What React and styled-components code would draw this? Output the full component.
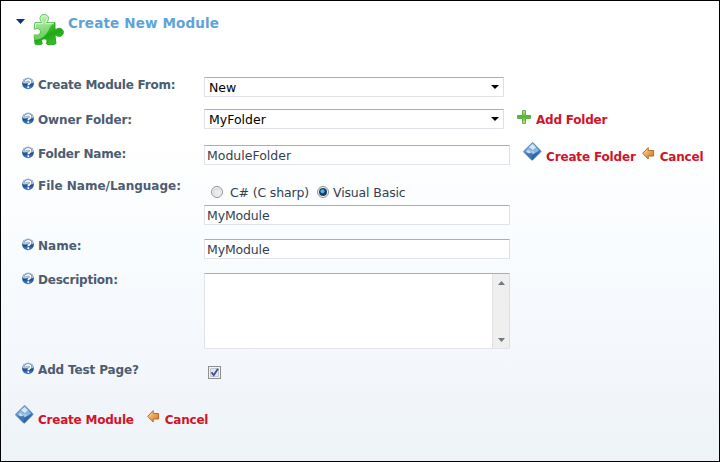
import React from "react";
import styled, { createGlobalStyle } from "styled-components";

const GlobalStyle = createGlobalStyle`
  body { margin: 0; }
  * { box-sizing: border-box; }
`;

const Panel = styled.main`
  width: 720px;
  height: 462px;
  border: 1px solid #000;
  padding: 0 0 0 14px;
  overflow: hidden;
  font-family: "DejaVu Sans", sans-serif;
  font-size: 12px;
  color: #333f50;
  background: linear-gradient(#fff 0, #fff 130px, #f9fcfe 250px, #f3f6fb 375px, #edf3f6 460px);
  svg { display: block; flex: none; }
`;

const Header = styled.header`
  display: flex;
  align-items: flex-start;
  height: 76px;
`;

const Toggle = styled.span`
  width: 9px;
  margin: 18px 8px 0 1px;
`;

const HeaderIcon = styled.span`
  margin: 13px 4px 0 0;
`;

const Title = styled.h1`
  margin: 13px 0 0 0;
  font-size: 13.5px;
  line-height: 18px;
  font-weight: bold;
  letter-spacing: 0.15px;
  white-space: nowrap;
  color: #5ea3d8;
`;

const Row = styled.div`
  display: grid;
  grid-template-columns: 189px 306px 1fr;
  align-items: start;
  height: ${(p) => p.$h}px;
`;

const Label = styled.label`
  display: flex;
  align-items: flex-start;
  gap: 4px;
  padding-left: 7px;
  margin-top: ${(p) => p.$top || 0}px;
  font-weight: bold;
  line-height: 16px;
  letter-spacing: ${(p) => p.$track || 0}px;
  white-space: nowrap;
  color: #4d5c70;
`;

const Field = styled.div`
  display: flex;
  align-items: center;
  width: ${(p) => p.$w || 306}px;
  height: 20px;
  padding: 0 2px 0 ${(p) => p.$pad || 2}px;
  border: 1px solid #e2e3ea;
  border-top-color: #abadb3;
  border-right-color: #dbdfe6;
  border-radius: 1px;
  background: #fff;
  color: ${(p) => p.$color || "#333f50"};
  font-size: 12.5px;
  letter-spacing: ${(p) => p.$track || 0}px;
  white-space: nowrap;
`;

const Arrow = styled.span`
  margin: 0 2px 0 auto;
`;

const Stack = styled.div`
  padding-top: 7px;
`;

const Radios = styled.div`
  display: flex;
  align-items: center;
  height: 16px;
  padding-left: 7px;
  margin-bottom: 5px;
  font-size: 12.5px;
  white-space: nowrap;
`;

const RadioText = styled.span`
  margin: 0 8px 0 ${(p) => p.$gap}px;
  letter-spacing: -0.15px;
`;

const TextArea = styled.div`
  display: flex;
  justify-content: flex-end;
  width: 306px;
  height: 76px;
  border: 1px solid #e2e3ea;
  border-top-color: #abadb3;
  border-right-color: #dbdfe6;
  border-radius: 1px;
  background: #fff;
`;

const ScrollBar = styled.div`
  display: flex;
  flex-direction: column;
  justify-content: space-between;
  align-items: center;
  width: 17px;
  padding: 7px 0 6px;
  border-left: 1px solid #e4e4e4;
  background: #efefef;
`;

const CheckBox = styled.span`
  display: block;
  width: 13px;
  height: 13px;
  margin: 5px 0 0 4px;
  border: 1px solid #8e8f8f;
  background: #f4f4f4;
`;

const Links = styled.div`
  display: flex;
  align-items: flex-start;
  padding-left: ${(p) => p.$left || 0}px;
`;

const Link = styled.a`
  margin-top: ${(p) => p.$top || 0}px;
  margin-left: ${(p) => p.$gap || 4}px;
  font-weight: bold;
  line-height: 16px;
  letter-spacing: ${(p) => p.$track ?? -0.22}px;
  white-space: nowrap;
  color: #cf142b;
`;

const IconBox = styled.span`
  margin-top: ${(p) => p.$top || 0}px;
  margin-left: ${(p) => p.$left || 0}px;
`;

function HelpIcon() {
  return (
    <svg width="12" height="13" viewBox="0 0 12 13">
      <defs>
        <linearGradient id="help" x1="0" y1="0" x2="0" y2="1">
          <stop offset="0" stopColor="#9db2ca" />
          <stop offset=".45" stopColor="#4d79ab" />
          <stop offset=".6" stopColor="#1e508e" />
          <stop offset="1" stopColor="#4a8ccb" />
        </linearGradient>
      </defs>
      <circle cx="6" cy="6.300" r="5.900" fill="url(#help)" />
      <path d="M.9 6C1.100 2.700 3.200 1.100 6 1.100S10.800 2.900 11.100 5.500C9.500 6.500 8.500 6.300 6 6.300S2.500 6.800.9 6Z" fill="#edf2f8" opacity=".65" />
      <path d="M3.500 4.700C3.800 2.200 8.600 2.100 8.600 4.900 8.600 6.600 6.300 6.500 6.300 8.300" fill="none" stroke="#3d6a9c" strokeWidth="2.500" />
      <path d="M3.500 4.700C3.800 2.200 8.600 2.100 8.600 4.900 8.600 6.600 6.300 6.500 6.300 8.200M6.300 9.200v1.900" fill="none" stroke="#fff" strokeWidth="1.700" />
    </svg>
  );
}

function PuzzleIcon() {
  const body =
    "M2 9H8.500C9.300 8 7.100 7.300 7.100 4.800A4.100 4.100 0 0 1 15.300 4.800C15.300 7.300 13 8 13.800 9H22V15.500C22.800 16.700 24 14.700 26.200 14.700A4.200 4.200 0 0 1 26.200 23.100C24 23.100 22.800 21.200 22 22.300L23 30.500C21 32 17 32 14 31.200 12.500 30 14.200 29.600 14 27.700 13.800 25.100 8.800 25.100 8.600 27.700 8.500 29.600 10 30 8.700 31.200 6.700 32 4 32 2 31L1.200 22C2 20.900 2.600 22 4.300 21.800 8.700 21.300 8.700 15.300 4.300 15 2.600 14.900 2 16.200 1.200 15.400Z";
  return (
    <svg width="31" height="32" viewBox="0 0 31 33" preserveAspectRatio="none">
      <defs>
        <linearGradient id="puzzle" x1="0" y1="0" x2=".4" y2="1">
          <stop offset="0" stopColor="#a8e698" />
          <stop offset=".45" stopColor="#4cc73f" />
          <stop offset=".75" stopColor="#1fa916" />
          <stop offset="1" stopColor="#35ba28" />
        </linearGradient>
        <linearGradient id="shine" x1="0" y1="0" x2="0" y2="1">
          <stop offset="0" stopColor="#e8fbdf" stopOpacity=".6" />
          <stop offset="1" stopColor="#8be37a" stopOpacity=".65" />
        </linearGradient>
        <clipPath id="puzzleClip"><path d={body} /></clipPath>
      </defs>
      <path d={body} fill="url(#puzzle)" stroke="#1fa31d" strokeWidth=".9" />
      <path d="M0 0h21v9C15 12 17 22 6 26L0 27Z" fill="url(#shine)" clipPath="url(#puzzleClip)" />
      <path d="M2.500 14V10h7.300C10.400 7.900 8.200 7.200 8.200 4.800 8.200 .8 14.200 .8 14.200 4.800 14.200 7.200 12 7.900 12.600 10H20.800" fill="none" stroke="#e2fad8" strokeWidth=".9" />
    </svg>
  );
}

function SaveIcon() {
  return (
    <svg width="19" height="19" viewBox="0 0 19 19">
      <defs>
        <linearGradient id="save" x1="0" y1="0" x2=".3" y2="1">
          <stop offset="0" stopColor="#8bb8e4" />
          <stop offset=".5" stopColor="#6796ca" />
          <stop offset="1" stopColor="#1b589f" />
        </linearGradient>
      </defs>
      <path d="M8.900.900q.8-.6 1.500.1l7.400 7.700q.5.700-.1 1.300L9.800 17.800q-.7.700-1.400 0L.8 10.200q-.5-.7.100-1.300Z" fill="url(#save)" stroke="#4f83b9" strokeWidth=".8" />
      <path d="M9.600 2l3.500 3.600-3.200 2.600-4-2.900Z" fill="#d5e8f8" />
      <path d="M13 5.500l3 3-3.200 2.300-3.500-2.300Z" fill="#8ab7e2" />
      <path d="M5.800 5.700l3.500 2.700-2 1.500-4-1.500Z" fill="#8ebae4" />
      <path d="M3 9l2.600-.7 2.600 2.200-2.800 1.200Z" fill="#c9dff3" />
      <path d="M7.500 9.500l2.200-1.200 2.800 2.200-2.700 1.800Z" fill="#a5cbed" />
      <path d="M2.500 10.500l3.200.7 4 3-1 2.700Z" fill="#4277b4" />
      <path d="M9.700 13.700l5.800-4.500 1.300.3-7.500 7.300Z" fill="#2f67a9" />
    </svg>
  );
}

function BackIcon() {
  return (
    <svg width="13" height="13" viewBox="0 0 13 13">
      <defs>
        <linearGradient id="back" x1="0" y1="0" x2="1" y2="1">
          <stop offset="0" stopColor="#ffe3b9" />
          <stop offset=".5" stopColor="#eea358" />
          <stop offset="1" stopColor="#d46f08" />
        </linearGradient>
      </defs>
      <path d="M.6 6.300L6.200.6V3.500h5.400v5.500H6.200v3Z" fill="url(#back)" stroke="#b46c2c" strokeLinejoin="round" />
    </svg>
  );
}

function PlusIcon() {
  return (
    <svg width="14" height="14" viewBox="0 0 14 14">
      <defs>
        <linearGradient id="plus" x1="0" y1="0" x2="0" y2="1">
          <stop offset="0" stopColor="#c6edb0" />
          <stop offset=".48" stopColor="#4db530" />
          <stop offset="1" stopColor="#c5f286" />
        </linearGradient>
      </defs>
      <path d="M5.500 .5h3V5.500h5v3h-5v5h-3v-5h-5v-3h5Z" fill="url(#plus)" stroke="#61ae45" />
    </svg>
  );
}

function Triangle({ color, up, w = 9, h = 5 }) {
  return (
    <svg width={w} height={h} viewBox="0 0 9 5" preserveAspectRatio="none">
      <path d={up ? "M0 5L4.500 0 9 5Z" : "M0 0H9L4.500 5Z"} fill={color} />
    </svg>
  );
}

function Radio({ checked }) {
  return (
    <svg width="12" height="12" viewBox="0 0 12 12">
      <circle cx="6" cy="6" r="5.500" fill="#fafafa" stroke="#8e8f8f" />
      <circle cx="6" cy="6" r="4" fill={checked ? "#174466" : "#d4d6d8"} />
      {checked ? <circle cx="5.500" cy="5.200" r="2" fill="#55b8e3" /> : <circle cx="6.500" cy="6.500" r="3.300" fill="#ebebeb" />}
    </svg>
  );
}

function HelpLabel({ children, ...rest }) {
  return (
    <Label {...rest}>
      <HelpIcon />
      {children}
    </Label>
  );
}

function Select({ children }) {
  return (
    <Field $w={300} $pad={4} $color="#000">
      {children}
      <Arrow><Triangle color="#000" w={8} h={4} /></Arrow>
    </Field>
  );
}

export default function App() {
  return (
    <>
      <GlobalStyle />
      <Panel>
        <Header>
          <Toggle><Triangle color="#0b3195" /></Toggle>
          <HeaderIcon><PuzzleIcon /></HeaderIcon>
          <Title>Create New Module</Title>
        </Header>
        <Row $h={32}>
          <HelpLabel $track={-0.23}>Create Module From:</HelpLabel>
          <Select>New</Select>
        </Row>
        <Row $h={36}>
          <HelpLabel $top={3} $track={-0.12}>Owner Folder:</HelpLabel>
          <Select>MyFolder</Select>
          <Links $left={7}>
            <IconBox $top={1}><PlusIcon /></IconBox>
            <Link $top={3} $gap={5}>Add Folder</Link>
          </Links>
        </Row>
        <Row $h={32}>
          <HelpLabel $top={1} $track={-0.2}>Folder Name:</HelpLabel>
          <Field>ModuleFolder</Field>
          <Links $left={13}>
            <IconBox $top={-3}><SaveIcon /></IconBox>
            <Link $top={4} $track={-0.15}>Create Folder</Link>
            <IconBox $top={2} $left={6}><BackIcon /></IconBox>
            <Link $top={4} $gap={5}>Cancel</Link>
          </Links>
        </Row>
        <Row $h={62}>
          <HelpLabel $top={1}>File Name/Language:</HelpLabel>
          <Stack>
            <Radios>
              <Radio />
              <RadioText $gap={7}>C# (C sharp)</RadioText>
              <Radio checked />
              <RadioText $gap={4}>Visual Basic</RadioText>
            </Radios>
            <Field $track={-0.15}>MyModule</Field>
          </Stack>
        </Row>
        <Row $h={34}>
          <HelpLabel $top={-1}>Name:</HelpLabel>
          <Field $track={-0.15}>MyModule</Field>
        </Row>
        <Row $h={88}>
          <HelpLabel $top={-1} $track={-0.22}>Description:</HelpLabel>
          <TextArea>
            <ScrollBar>
              <Triangle color="#777" up w={7} h={4} />
              <Triangle color="#777" w={7} h={4} />
            </ScrollBar>
          </TextArea>
        </Row>
        <Row $h={44}>
          <HelpLabel $top={1} $track={-0.14}>Add Test Page?</HelpLabel>
          <CheckBox>
            <svg width="11" height="11" viewBox="0 0 11 11">
              <path d="M1.500 1.500h8v8h-8Z" fill="#e3e6ea" stroke="#c2c7cf" />
              <path d="M2.500 5.200l2.200 3L9 1.700" fill="none" stroke="#3f529c" strokeWidth="1.900" />
            </svg>
          </CheckBox>
        </Row>
        <Links>
          <IconBox><SaveIcon /></IconBox>
          <Link $top={7}>Create Module</Link>
          <IconBox $top={5} $left={13}><BackIcon /></IconBox>
          <Link $top={7} $gap={5}>Cancel</Link>
        </Links>
      </Panel>
    </>
  );
}
